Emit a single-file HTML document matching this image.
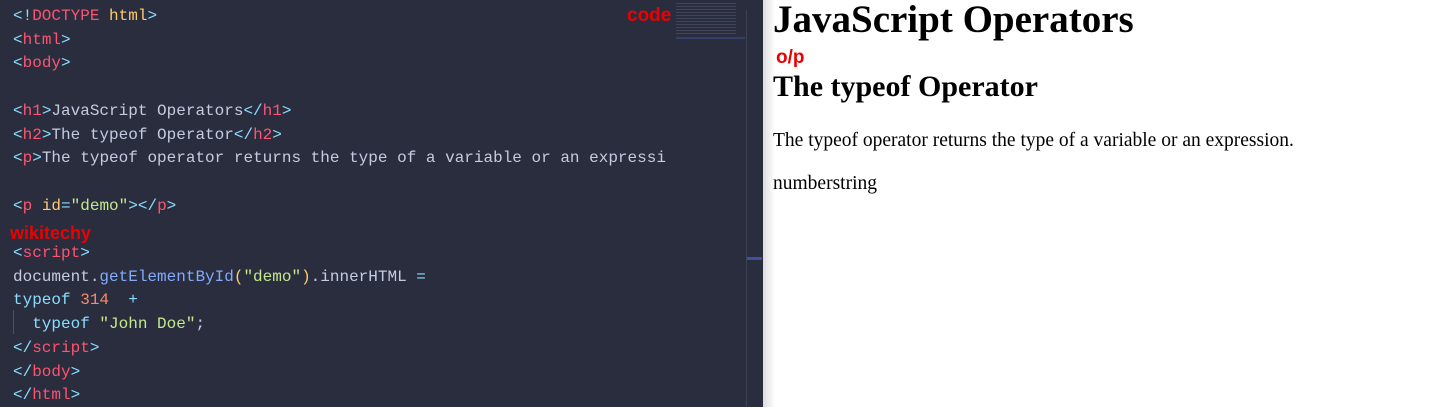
<!DOCTYPE html>
<html><head><style>
body{margin:0;width:1445px;height:407px;overflow:hidden;background:#fff;position:relative;font-family:"Liberation Sans",sans-serif}
#ed{position:absolute;left:0;top:0;width:763px;height:407px;background:#292d3e}
#code{position:absolute;left:13px;top:5px;margin:0;font-family:"Liberation Mono",monospace;font-size:16px;line-height:23.7px;color:#c5cbe0;white-space:pre}
.t{color:#ff5370}.b{color:#89ddff}.s{color:#c3e88d}.f{color:#82aaff}.n{color:#f78c6c}.y{color:#ffcb6b}.a{color:#c792ea}
#vl{position:absolute;left:746px;top:10px;width:1px;height:397px;background:#3d4354}
#mark{position:absolute;left:747px;top:257px;width:15px;height:3px;background:#3f51a0}
#mini{position:absolute;left:676px;top:37px;width:69px;height:2px;background:#34406a}
#shadow{position:absolute;left:763px;top:0;width:12px;height:407px;background:linear-gradient(to right,#ddd,#fff)}
.lbl{position:absolute;color:#e00;font-weight:bold;font-family:"Liberation Sans",sans-serif}
#r{position:absolute;left:773px;top:0;font-family:"Liberation Serif",serif;color:#000}
#r div{position:absolute;left:0;white-space:nowrap}
</style></head><body>
<div id="ed">
<pre id="code"><span class="b">&lt;!</span><span class="t">DOCTYPE</span> <span class="y">html</span><span class="b">&gt;</span>
<span class="b">&lt;</span><span class="t">html</span><span class="b">&gt;</span>
<span class="b">&lt;</span><span class="t">body</span><span class="b">&gt;</span>

<span class="b">&lt;</span><span class="t">h1</span><span class="b">&gt;</span>JavaScript Operators<span class="b">&lt;/</span><span class="t">h1</span><span class="b">&gt;</span>
<span class="b">&lt;</span><span class="t">h2</span><span class="b">&gt;</span>The typeof Operator<span class="b">&lt;/</span><span class="t">h2</span><span class="b">&gt;</span>
<span class="b">&lt;</span><span class="t">p</span><span class="b">&gt;</span>The typeof operator returns the type of a variable or an expressi

<span class="b">&lt;</span><span class="t">p</span> <span class="y">id</span><span class="b">=</span><span class="s">"demo"</span><span class="b">&gt;&lt;/</span><span class="t">p</span><span class="b">&gt;</span>

<span class="b">&lt;</span><span class="t">script</span><span class="b">&gt;</span>
document.<span class="f">getElementById</span><span class="y">(</span><span class="s">"demo"</span><span class="y">)</span>.innerHTML <span class="b">=</span>
<span class="b">typeof</span> <span class="n">314</span>  <span class="b">+</span>
  <span class="b">typeof</span> <span class="s">"John Doe"</span>;
<span class="b">&lt;/</span><span class="t">script</span><span class="b">&gt;</span>
<span class="b">&lt;/</span><span class="t">body</span><span class="b">&gt;</span>
<span class="b">&lt;/</span><span class="t">html</span><span class="b">&gt;</span></pre>
<div style="position:absolute;left:13px;top:310px;width:1px;height:24px;background:#4a5066"></div>
<div id="vl"></div><div id="mark"></div><div id="mini"></div>
<div style="position:absolute;left:676px;top:3px;width:60px;height:32px;opacity:.18;background:repeating-linear-gradient(#a6accd 0 1px,transparent 1px 3px)"></div>
</div>
<div id="shadow"></div>
<div class="lbl" style="left:627px;top:5px;font-size:19px">code</div>
<div class="lbl" style="left:10px;top:223px;font-size:18px">wikitechy</div>
<div class="lbl" style="left:776px;top:47px;font-size:19px">o/p</div>
<div id="r">
<div style="top:-3px;font-size:39px;font-weight:bold">JavaScript Operators</div>
<div style="top:70px;font-size:30px;font-weight:bold">The typeof Operator</div>
<div style="top:130px;font-size:19.5px">The typeof operator returns the type of a variable or an expression.</div>
<div style="top:173px;font-size:19.5px">numberstring</div>
</div>
</body></html>
